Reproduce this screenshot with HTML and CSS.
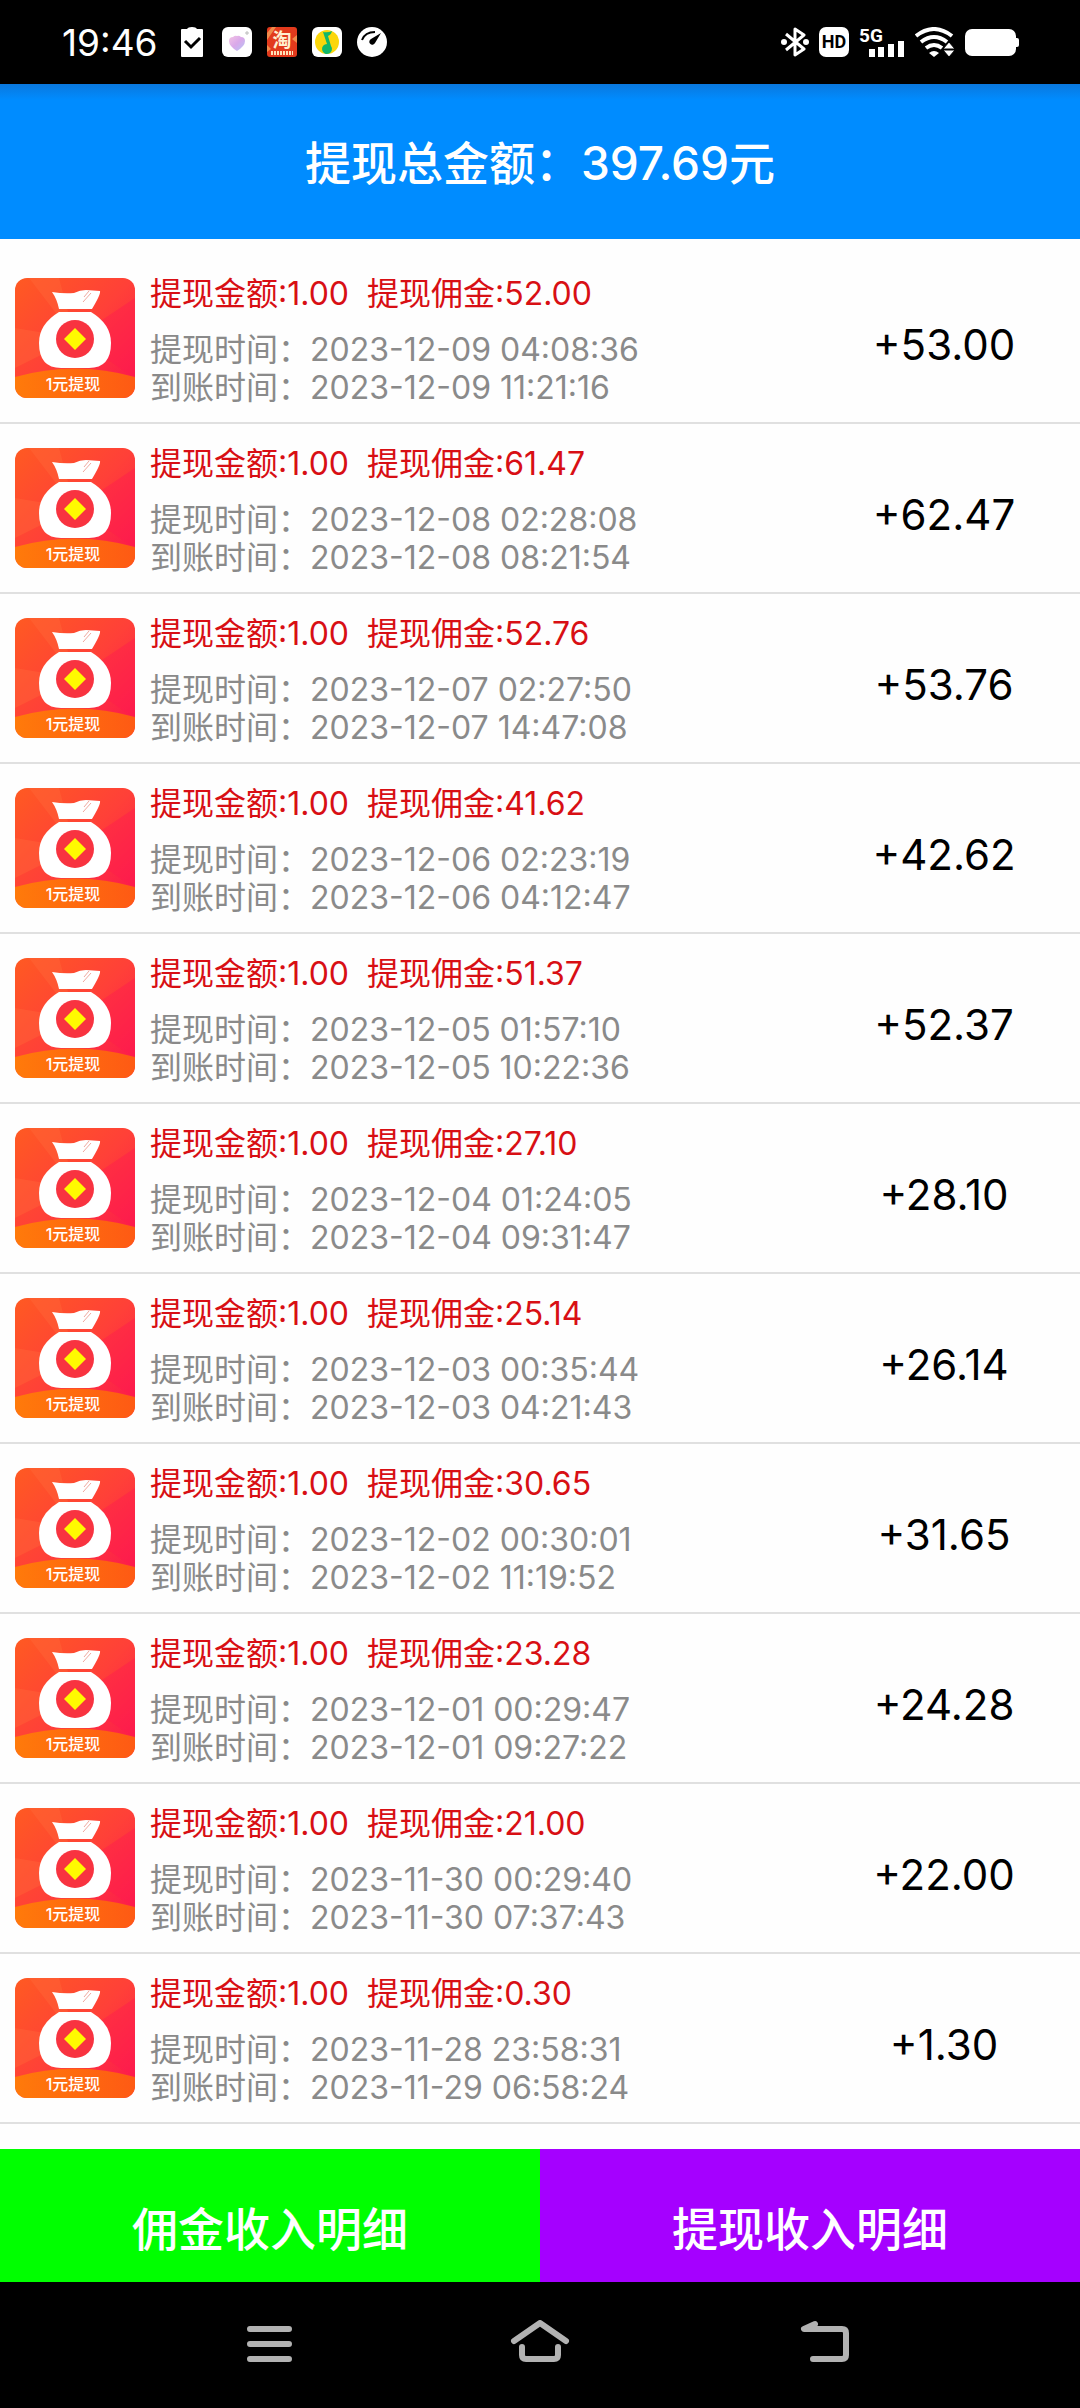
FILE: index.html
```html
<!DOCTYPE html>
<html lang="zh-CN">
<head>
    <meta charset="UTF-8">
    <meta name="viewport" content="width=device-width, initial-scale=1.0">
    <title>提现收入明细</title>
    <link rel="stylesheet" href="styles.css">
</head>
<body>
    <div class="status-bar">
        <div class="status-left">
            <span class="clock">19:46</span>
            <svg class="status-icon" viewBox="0 0 30 30">
                <path fill="#fff" d="M5 2h5q1-2 5-2t5 2h5q1 0 1 1v26q0 1-1 1H5q-1 0-1-1V3q0-1 1-1z"/>
                <path fill="none" stroke="#000" stroke-width="3" d="M8 14l6 6 9-9"/>
            </svg>
            <svg class="status-icon" viewBox="0 0 30 30">
                <defs>
                    <linearGradient id="heart" x1="0" y1="0" x2="1" y2="1">
                        <stop offset="0" stop-color="#f3c4e4"/>
                        <stop offset="0.5" stop-color="#d9a8ea"/>
                        <stop offset="1" stop-color="#b3c6f5"/>
                    </linearGradient>
                </defs>
                <rect width="30" height="30" rx="6" fill="#fff"/>
                <path fill="url(#heart)" d="M15 24q-8-5-8-10 0-4 4-4 2-2 4-1 2-1 4 1 4 0 4 4 0 5-8 10z"/>
                <path stroke="#bbb" d="M25 4v4M23 6h4"/>
            </svg>
            <svg class="status-icon" viewBox="0 0 30 30">
                <rect width="30" height="30" rx="3" fill="#e23a1c"/>
                <path fill="#f08a4a" d="M0 6l5-6h4L0 13zM30 8v8l-5-4zM0 18l4 4-4 3z"/>
                <text class="tao" x="15" y="20" text-anchor="middle">淘</text>
                <path stroke="#ffe2b8" stroke-width="4" stroke-dasharray="2 1" d="M4 26h22"/>
            </svg>
            <svg class="status-icon" viewBox="0 0 30 30">
                <rect width="30" height="30" rx="6" fill="#fff"/>
                <circle cx="15" cy="15" r="12" fill="#fbd60b"/>
                <path fill="#12b76a" d="M11 5q5 1 9-1-1 4-4 5l3 10a5 5 0 1 1-4-2L11 5z"/>
            </svg>
            <svg class="status-icon" viewBox="0 0 30 30">
                <circle cx="15" cy="15" r="15" fill="#fff"/>
                <path fill="none" stroke="#000" stroke-width="2" d="M5 13Q8 5 18 5"/>
                <path fill="#000" d="M24 6l-6 10a3 3 0 1 1-4-4z"/>
            </svg>
        </div>
        <div class="status-right">
            <svg class="icon-bluetooth" viewBox="0 0 28 30">
                <path fill="none" stroke="#fff" stroke-width="3" stroke-linejoin="round" d="M5 7l18 15-9 6V2l9 6L5 23"/>
                <circle cx="3" cy="15" r="3" fill="#fff"/>
                <circle cx="25" cy="15" r="3" fill="#fff"/>
            </svg>
            <span class="hd">HD</span>
            <svg class="icon-signal" viewBox="0 0 46 30">
                <text class="net" x="0" y="15">5G</text>
                <path stroke="#fff" stroke-width="6" d="M13 22v8M22 20v10M32 17v13M42 14v16"/>
            </svg>
            <svg class="icon-wifi" viewBox="0 0 40 30">
                <g fill="none" stroke="#fff" stroke-width="4">
                    <path d="M1 9q18-14 36 0"/>
                    <path d="M6 15q13-10 26 0"/>
                    <path d="M11 21q8-6 16 0"/>
                </g>
                <path fill="#fff" d="M14 26q5-4 10 0l-5 4z"/>
                <path fill="#fff" stroke="#000" d="M28 22l6-7 6 7zM28 23l6 7 6-7z"/>
            </svg>
            <svg class="icon-battery" viewBox="0 0 54 27">
                <rect width="51" height="27" rx="7" fill="#fff"/>
                <rect x="49" y="9" width="5" height="9" rx="2" fill="#fff"/>
            </svg>
        </div>
    </div>

    <header class="header">
        <h1>提现总金额：397.69元</h1>
    </header>

    <!-- 钱袋图标的渐变 -->
    <svg class="defs" aria-hidden="true">
        <defs>
            <linearGradient id="bagBg" x1="0" y1="0" x2="1" y2="1">
                <stop offset="0" stop-color="#ff5a22"/>
                <stop offset="0.5" stop-color="#ff4038"/>
                <stop offset="1" stop-color="#fb1450"/>
            </linearGradient>
            <linearGradient id="bagFoot" x1="0" y1="0" x2="1" y2="0">
                <stop offset="0" stop-color="#ff7a0a"/>
                <stop offset="1" stop-color="#fe5a14"/>
            </linearGradient>
        </defs>
    </svg>

    <ul class="list" id="list"></ul>

    <div class="tabs">
        <button class="tab tab-green">佣金收入明细</button>
        <button class="tab tab-purple">提现收入明细</button>
    </div>

    <nav class="nav-bar">
        <button class="nav-btn" aria-label="菜单">
            <svg viewBox="0 0 90 48"><path d="M25 9h39M25 24h39M25 39h39"/></svg>
        </button>
        <button class="nav-btn" aria-label="主页">
            <svg viewBox="0 0 90 48"><path d="M19 21L45 3l26 18M27 27v8q0 4 4 4h28q4 0 4-4v-8"/></svg>
        </button>
        <button class="nav-btn" aria-label="返回">
            <svg viewBox="0 0 90 48"><path d="M50 4L39 9h38q4 0 4 4v22q0 4-4 4H48"/></svg>
        </button>
    </nav>

    <script src="script.js"></script>
</body>
</html>
```
FILE: styles.css
```css
* {
    box-sizing: border-box;
}
body {
    font-family: Inter, "Noto Sans CJK SC", sans-serif;
    margin: 0;
    min-height: 100vh;
    display: flex;
    flex-direction: column;
    background-color: #fefefe;
}
.status-bar {
    display: flex;
    justify-content: space-between;
    align-items: center;
    height: 84px;
    padding: 0 61px 0 62px;
    background-color: #000;
    color: #fff;
}
.status-left,
.status-right {
    display: flex;
    align-items: center;
}
.status-left {
    gap: 15px;
}
.status-right {
    gap: 10px;
}
.clock {
    font-size: 37px;
    margin-right: 4px;
}
.status-icon {
    width: 30px;
    height: 30px;
}
.tao {
    font-size: 19px;
    font-weight: 700;
    fill: #fff0d0;
}
.hd {
    width: 30px;
    height: 30px;
    border-radius: 7px;
    background-color: #fff;
    color: #000;
    font-family: Roboto, sans-serif;
    font-size: 18px;
    font-weight: 700;
    line-height: 30px;
    text-align: center;
}
.net {
    font-family: Roboto, sans-serif;
    font-size: 19px;
    font-weight: 700;
    fill: #fff;
}
.icon-bluetooth {
    width: 28px;
    height: 30px;
}
.icon-signal {
    width: 46px;
    height: 30px;
    overflow: visible;
}
.icon-wifi {
    width: 40px;
    height: 30px;
}
.icon-battery {
    width: 54px;
    height: 27px;
}
.header {
    display: flex;
    align-items: center;
    justify-content: center;
    height: 155px;
    padding-bottom: 4px;
    background: linear-gradient(#0a78de, #008cff 16px);
    color: #fff;
}
h1 {
    margin: 0;
    font-size: 46px;
    font-weight: 500;
}
.defs {
    position: absolute;
    width: 0;
    height: 0;
}
.list {
    flex: 1;
    margin: 0;
    padding: 15px 0 25px;
    list-style: none;
}
.item {
    display: flex;
    align-items: center;
    height: 170px;
    padding-left: 15px;
    border-bottom: 2px solid #e0e0e0;
}
.item-icon {
    width: 120px;
    height: 120px;
    margin-right: 15px;
    border-radius: 12px;
}
.bag-text {
    font-size: 16px;
    font-weight: 500;
    fill: #fff;
}
.info {
    flex: 1;
    padding-top: 6px;
    font-size: 32px;
    line-height: 38px;
    color: #8a8a8a;
}
.info p {
    margin: 0;
}
.info .sum {
    margin-bottom: 18px;
    color: #d80f14;
    white-space: pre;
}
.total {
    width: 272px;
    padding-top: 12px;
    text-align: center;
    font-size: 42px;
    color: #000;
}
.tabs {
    display: flex;
}
.tab {
    flex: 1;
    height: 133px;
    padding: 20px 0 0;
    border: none;
    color: #fff;
    font-family: inherit;
    font-size: 46px;
    font-weight: 500;
    cursor: pointer;
}
.tab-green {
    background-color: #00ff00;
}
.tab-purple {
    background-color: #a500ff;
}
.nav-bar {
    display: flex;
    justify-content: center;
    height: 126px;
    background-color: #000;
}
.nav-btn {
    width: 25%;
    padding: 0;
    border: none;
    background: none;
    cursor: pointer;
}
.nav-btn svg {
    width: 90px;
    height: 48px;
    fill: none;
    stroke: #b2b2b2;
    stroke-width: 6;
    stroke-linecap: round;
    stroke-linejoin: round;
}
```
FILE: script.js
```js
const items = [
    { fee: '52.00', out: '2023-12-09 04:08:36', arrive: '2023-12-09 11:21:16', total: '53.00' },
    { fee: '61.47', out: '2023-12-08 02:28:08', arrive: '2023-12-08 08:21:54', total: '62.47' },
    { fee: '52.76', out: '2023-12-07 02:27:50', arrive: '2023-12-07 14:47:08', total: '53.76' },
    { fee: '41.62', out: '2023-12-06 02:23:19', arrive: '2023-12-06 04:12:47', total: '42.62' },
    { fee: '51.37', out: '2023-12-05 01:57:10', arrive: '2023-12-05 10:22:36', total: '52.37' },
    { fee: '27.10', out: '2023-12-04 01:24:05', arrive: '2023-12-04 09:31:47', total: '28.10' },
    { fee: '25.14', out: '2023-12-03 00:35:44', arrive: '2023-12-03 04:21:43', total: '26.14' },
    { fee: '30.65', out: '2023-12-02 00:30:01', arrive: '2023-12-02 11:19:52', total: '31.65' },
    { fee: '23.28', out: '2023-12-01 00:29:47', arrive: '2023-12-01 09:27:22', total: '24.28' },
    { fee: '21.00', out: '2023-11-30 00:29:40', arrive: '2023-11-30 07:37:43', total: '22.00' },
    { fee: '0.30', out: '2023-11-28 23:58:31', arrive: '2023-11-29 06:58:24', total: '1.30' }
];

// 钱袋图标
const bagIcon = `
    <svg class="item-icon" viewBox="0 0 120 120">
        <rect width="120" height="120" fill="url(#bagBg)"/>
        <path fill="#ff6a3a" opacity="0.4" d="M60 60L14 0h30zM60 60L0 50v40z"/>
        <path fill="#ff1a50" opacity="0.4" d="M60 60l60-40v80z"/>
        <path fill="#fff" d="M37 14q12 2 22 1 6-3 12-3l14 1q1 3-8 18H44q-2-10-7-17z"/>
        <path fill="none" stroke="#f0a8a0" d="M69 19l5-6M68 24l8-9"/>
        <path fill="#fff" d="M44 34h32q20 12 20 31 0 25-22 25H46q-22 0-22-25 0-19 20-31z"/>
        <circle cx="60" cy="61" r="19" fill="#f83340"/>
        <path fill="#fffa00" d="M60 50l11 11-11 11-11-11z"/>
        <path fill="url(#bagFoot)" d="M0 99q60-17 120 0v21H0z"/>
        <text class="bag-text" x="58" y="112" text-anchor="middle">1元提现</text>
    </svg>`;

document.getElementById('list').innerHTML = items.map(item => `
    <li class="item">
        ${bagIcon}
        <div class="info">
            <p class="sum">提现金额:1.00  提现佣金:${item.fee}</p>
            <p>提现时间：${item.out}</p>
            <p>到账时间：${item.arrive}</p>
        </div>
        <div class="total">+${item.total}</div>
    </li>
`).join('');
```
